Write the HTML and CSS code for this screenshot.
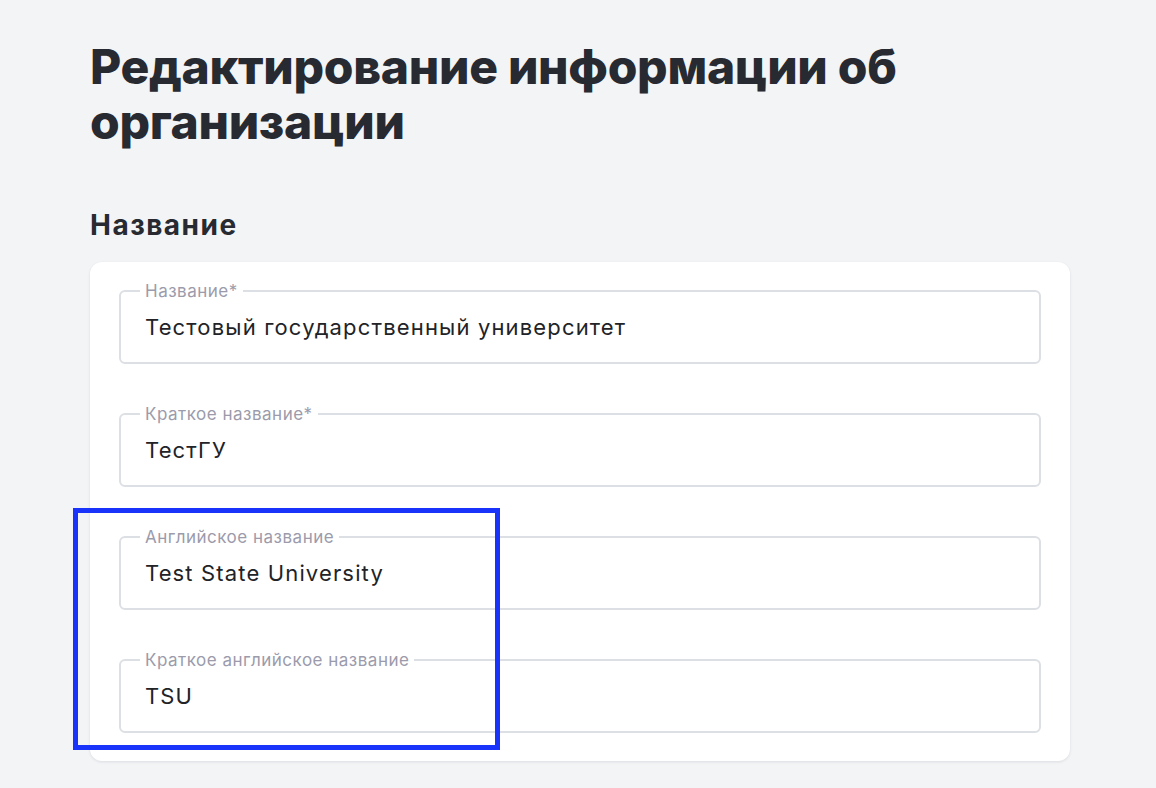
FILE: index.html
```html
<!DOCTYPE html>
<html lang="ru">
<head>
<meta charset="utf-8">
<title>Редактирование информации об организации</title>
<link rel="stylesheet" href="styles.css">
</head>
<body>
<main class="page">
  <h1 class="title">Редактирование информации об организации</h1>
  <section class="section">
    <h2 class="section-title">Название</h2>
    <div class="card">
      <fieldset class="field">
        <legend class="field-label">Название*</legend>
        <div class="field-value">Тестовый государственный университет</div>
      </fieldset>
      <fieldset class="field">
        <legend class="field-label">Краткое название*</legend>
        <div class="field-value">ТестГУ</div>
      </fieldset>
      <fieldset class="field">
        <legend class="field-label">Английское название</legend>
        <div class="field-value">Test State University</div>
      </fieldset>
      <fieldset class="field">
        <legend class="field-label">Краткое английское название</legend>
        <div class="field-value">TSU</div>
      </fieldset>
    </div>
  </section>
  <div class="highlight"></div>
</main>
</body>
</html>
```

FILE: styles.css
```css
html, body {
  margin: 0;
  padding: 0;
  background: #f3f4f6;
}

body {
  font-family: Inter, "Noto Sans", sans-serif;
  color: #26272f;
}

.page {
  position: relative;
  padding: 39px 86px 0 90px;
  min-height: 788px;
  box-sizing: border-box;
}

.title {
  margin: 0;
  font-size: 48px;
  line-height: 55px;
  font-weight: 800;
  color: #282a32;
  letter-spacing: -0.3px;
  max-width: 840px;
}

.section-title {
  margin: 59px 0 0;
  font-size: 28px;
  line-height: 34px;
  font-weight: 700;
  color: #282a32;
  letter-spacing: 1.5px;
}

.card {
  margin-top: 20px;
  background: #ffffff;
  border-radius: 12px;
  box-shadow: 0 1px 3px rgba(20, 24, 40, 0.10);
  padding: 20px 29px 28px;
  display: flex;
  flex-direction: column;
  gap: 41px;
}

.field {
  margin: 0;
  padding: 13px 24px 21px;
  border: 2px solid #dcdfe3;
  border-radius: 6px;
  min-width: 0;
}

.field-label {
  margin-left: -5px;
  padding: 0 5px;
  font-size: 17px;
  line-height: 18px;
  color: #9b9bab;
  letter-spacing: 0.5px;
}

.field-value {
  font-size: 22px;
  line-height: 28px;
  color: #222327;
  letter-spacing: 1.15px;
}

.highlight {
  position: absolute;
  left: 73px;
  top: 508px;
  width: 427px;
  height: 242px;
  box-sizing: border-box;
  border: 5px solid #1a33fb;
  pointer-events: none;
}
```
